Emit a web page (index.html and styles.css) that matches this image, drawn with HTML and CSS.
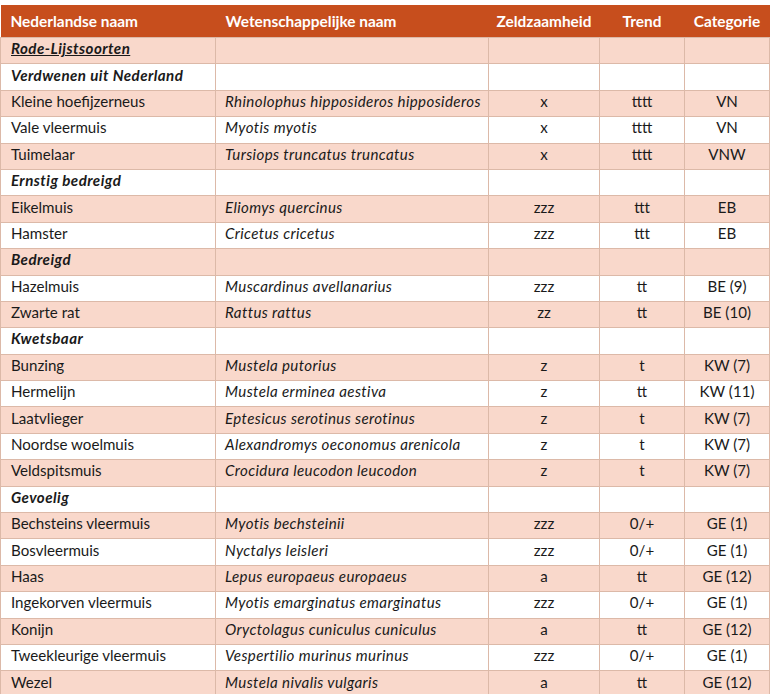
FILE: index.html
```html
<!DOCTYPE html>
<html lang="nl">
<head>
<meta charset="utf-8">
<title>Rode Lijst zoogdieren</title>
<link rel="stylesheet" href="styles.css">
</head>
<body>
<div class="top-gap"></div>
<table class="redlist">
  <colgroup>
    <col class="c-nl"><col class="c-sci"><col class="c-zz"><col class="c-tr"><col class="c-cat">
  </colgroup>
  <thead>
    <tr>
      <th class="left">Nederlandse naam</th>
      <th class="left">Wetenschappelijke naam</th>
      <th>Zeldzaamheid</th>
      <th>Trend</th>
      <th>Categorie</th>
    </tr>
  </thead>
  <tbody>
    <tr class="group"><td><span class="ul">Rode-Lijstsoorten</span></td><td></td><td></td><td></td><td></td></tr>
    <tr class="group"><td>Verdwenen uit Nederland</td><td></td><td></td><td></td><td></td></tr>
    <tr><td>Kleine hoefijzerneus</td><td class="sci">Rhinolophus hipposideros hipposideros</td><td>x</td><td>tttt</td><td>VN</td></tr>
    <tr><td>Vale vleermuis</td><td class="sci">Myotis myotis</td><td>x</td><td>tttt</td><td>VN</td></tr>
    <tr><td>Tuimelaar</td><td class="sci">Tursiops truncatus truncatus</td><td>x</td><td>tttt</td><td>VNW</td></tr>
    <tr class="group"><td>Ernstig bedreigd</td><td></td><td></td><td></td><td></td></tr>
    <tr><td>Eikelmuis</td><td class="sci">Eliomys quercinus</td><td>zzz</td><td>ttt</td><td>EB</td></tr>
    <tr><td>Hamster</td><td class="sci">Cricetus cricetus</td><td>zzz</td><td>ttt</td><td>EB</td></tr>
    <tr class="group"><td>Bedreigd</td><td></td><td></td><td></td><td></td></tr>
    <tr><td>Hazelmuis</td><td class="sci">Muscardinus avellanarius</td><td>zzz</td><td>tt</td><td>BE (9)</td></tr>
    <tr><td>Zwarte rat</td><td class="sci">Rattus rattus</td><td>zz</td><td>tt</td><td>BE (10)</td></tr>
    <tr class="group"><td>Kwetsbaar</td><td></td><td></td><td></td><td></td></tr>
    <tr><td>Bunzing</td><td class="sci">Mustela putorius</td><td>z</td><td>t</td><td>KW (7)</td></tr>
    <tr><td>Hermelijn</td><td class="sci">Mustela erminea aestiva</td><td>z</td><td>tt</td><td>KW (11)</td></tr>
    <tr><td>Laatvlieger</td><td class="sci">Eptesicus serotinus serotinus</td><td>z</td><td>t</td><td>KW (7)</td></tr>
    <tr><td>Noordse woelmuis</td><td class="sci">Alexandromys oeconomus arenicola</td><td>z</td><td>t</td><td>KW (7)</td></tr>
    <tr><td>Veldspitsmuis</td><td class="sci">Crocidura leucodon leucodon</td><td>z</td><td>t</td><td>KW (7)</td></tr>
    <tr class="group"><td>Gevoelig</td><td></td><td></td><td></td><td></td></tr>
    <tr><td>Bechsteins vleermuis</td><td class="sci">Myotis bechsteinii</td><td>zzz</td><td>0/+</td><td>GE (1)</td></tr>
    <tr><td>Bosvleermuis</td><td class="sci">Nyctalys leisleri</td><td>zzz</td><td>0/+</td><td>GE (1)</td></tr>
    <tr><td>Haas</td><td class="sci">Lepus europaeus europaeus</td><td>a</td><td>tt</td><td>GE (12)</td></tr>
    <tr><td>Ingekorven vleermuis</td><td class="sci">Myotis emarginatus emarginatus</td><td>zzz</td><td>0/+</td><td>GE (1)</td></tr>
    <tr><td>Konijn</td><td class="sci">Oryctolagus cuniculus cuniculus</td><td>a</td><td>tt</td><td>GE (12)</td></tr>
    <tr><td>Tweekleurige vleermuis</td><td class="sci">Vespertilio murinus murinus</td><td>zzz</td><td>0/+</td><td>GE (1)</td></tr>
    <tr><td>Wezel</td><td class="sci">Mustela nivalis vulgaris</td><td>a</td><td>tt</td><td>GE (12)</td></tr>
    <tr class="spacer"><td></td><td></td><td></td><td></td><td></td></tr>
  </tbody>
</table>
</body>
</html>
```

FILE: styles.css
```css
html, body {
  margin: 0;
  padding: 0;
  background: #ffffff;
}

body {
  font-family: Lato, "Open Sans", "Liberation Sans", sans-serif;
  color: #1a1a1a;
  overflow: hidden;
}

.top-gap {
  height: 5px;
}

.redlist {
  width: 769px;
  border-collapse: collapse;
  table-layout: fixed;
  font-size: 15.1px;
}

.c-nl { width: 215px; }
.c-sci { width: 273px; }
.c-zz { width: 111px; }
.c-tr { width: 85px; }
.c-cat { width: 85px; }

.redlist th {
  background: #c74e1d;
  color: #ffffff;
  font-weight: 700;
  font-size: 15.4px;
  height: 31px;
  padding: 0 6px 1px;
  text-align: center;
  border: none;
  vertical-align: middle;
}

.redlist th.left {
  text-align: left;
  padding-left: 10px;
}

.redlist td {
  height: 20.4px;
  padding: 0 6px 5px;
  border: 1px solid #dcb9a8;
  text-align: center;
  vertical-align: middle;
  line-height: 18px;
  white-space: nowrap;
}

.redlist td:first-child {
  text-align: left;
  padding-left: 10px;
}

.redlist td.sci {
  text-align: left;
  padding-left: 9px;
  font-style: italic;
  letter-spacing: 0.38px;
}

.redlist tbody tr:nth-child(odd) td {
  background: #f9d8cb;
}

.redlist tr.group td:first-child {
  font-weight: 700;
  font-style: italic;
  letter-spacing: 0.45px;
}

.ul {
  text-decoration: underline;
}
```
